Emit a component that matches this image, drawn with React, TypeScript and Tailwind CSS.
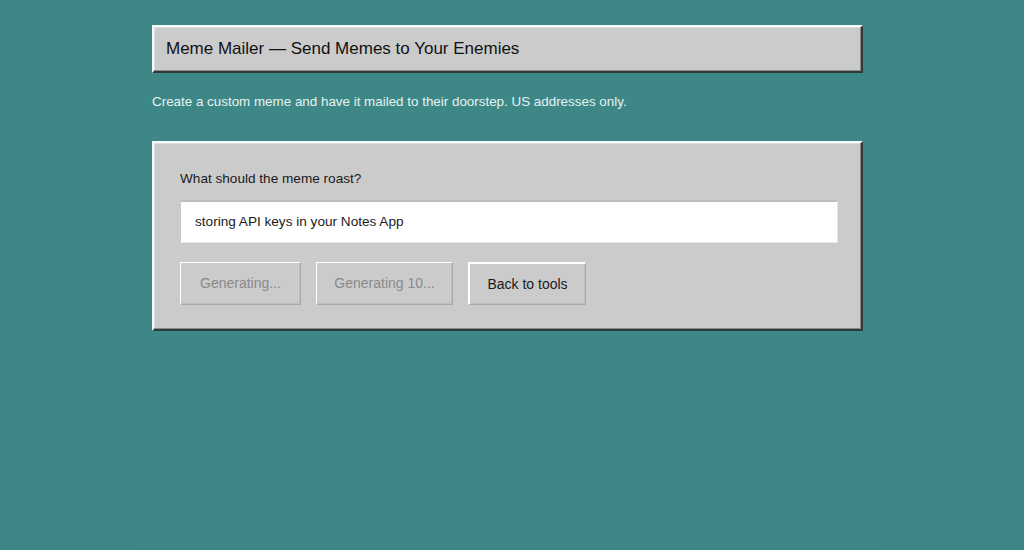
import React from "react";

export default function App() {
  const raised =
    "border-2 border-t-[#f2fafa] border-l-[#f2fafa] border-b-[#2f3a3a] border-r-[#2f3a3a] shadow-[inset_-1px_-1px_0_#8a8a8a,inset_1px_1px_0_#dedede]";
  const btn =
    "h-[43px] bg-[#cccbcc] border border-t-white border-l-white border-b-[#a9a9a9] border-r-[#a9a9a9] shadow-[inset_-1px_-1px_0_#bdbdbd] text-[14px] whitespace-nowrap px-0 flex items-center justify-center";
  return (
    <div
      className="w-[1024px] h-[550px] bg-[#3c8786] overflow-hidden"
      style={{ fontFamily: '"Liberation Sans", Arial, sans-serif' }}
    >
      <div className="ml-[140px] w-[740px] h-full bg-[#3d8887] pl-[12px] pt-[25px]">
        <div className={`w-[711px] h-[48px] bg-[#cccbcc] ${raised} flex items-center pl-[12px]`}>
          <span className="text-[17px] text-[#111]">Meme Mailer — Send Memes to Your Enemies</span>
        </div>
        <p className="mt-[21px] text-[13.4px] text-[#e6f3f3] leading-[16px]">
          Create a custom meme and have it mailed to their doorstep. US addresses only.
        </p>
        <div className={`mt-[31px] w-[711px] h-[190px] bg-[#cccbcc] ${raised} pl-[26px] pr-[23px] pt-[28px]`}>
          <div className="text-[13.6px] text-[#1a1a1a] leading-[16px]">What should the meme roast?</div>
          <div className="mt-[13px] h-[43px] bg-white border-t-2 border-l border-t-[#bdbdbd] border-l-[#c8c8c8] border-b border-r border-b-[#e6e6e6] border-r-[#e6e6e6] flex items-center pl-[14px]">
            <span className="text-[13.6px] text-[#1a1a1a]">storing API keys in your Notes App</span>
          </div>
          <div className="mt-[19px] flex gap-[15px]">
            <button className={`${btn} w-[121px] text-[#8a8a8a]`}>Generating...</button>
            <button className={`${btn} w-[137px] text-[#8a8a8a]`}>Generating 10...</button>
            <button className={`${btn} w-[118px] text-[#1a1a1a] border-t-2 border-l-2`}>Back to tools</button>
          </div>
        </div>
      </div>
    </div>
  );
}
